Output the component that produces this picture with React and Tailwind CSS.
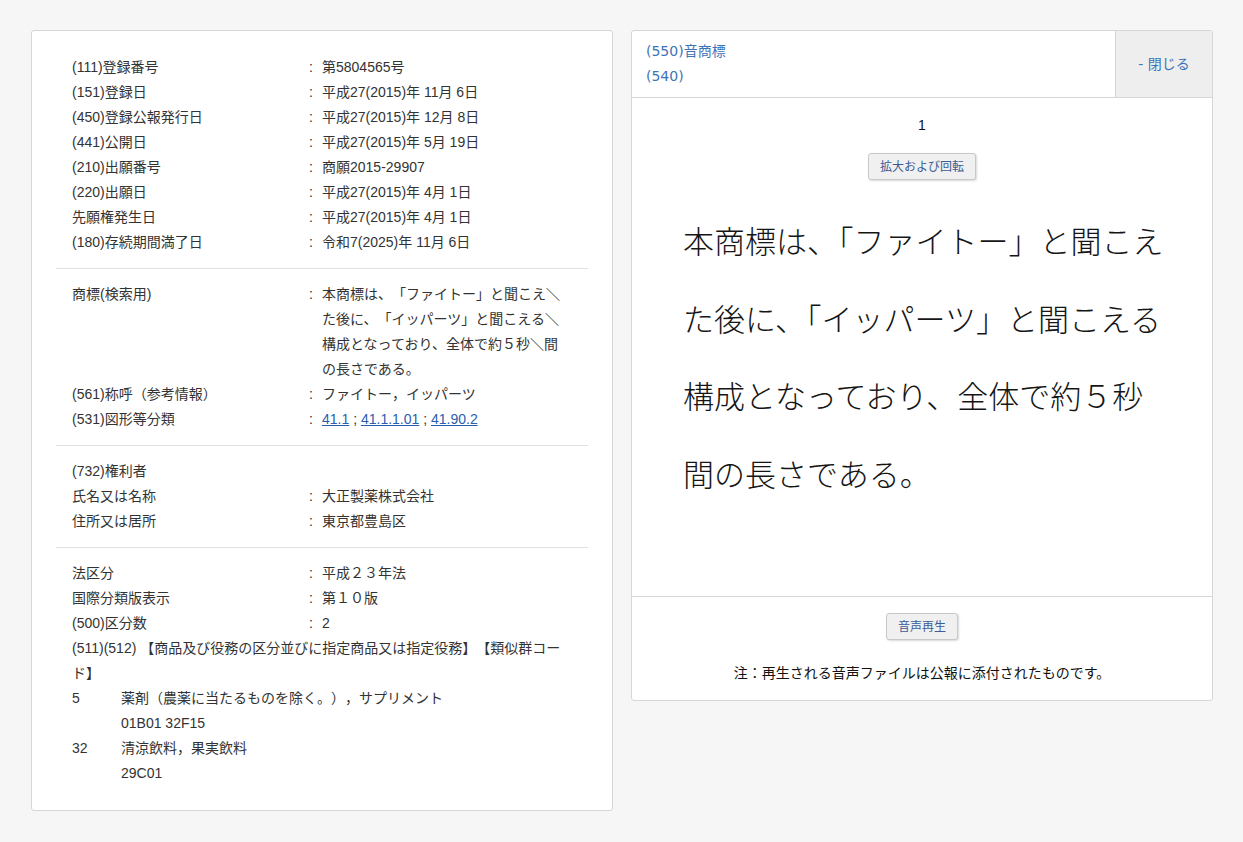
import React from 'react';

const font = { fontFamily: '"Liberation Sans", Arial, "Noto Sans CJK JP", sans-serif' };

const Row = ({ label, children, colon = true }) => (
  <div className="flex leading-[25px]">
    <div className="w-[237px] shrink-0">{label}</div>
    {colon ? (
      <>
        <div className="w-[4px] shrink-0">:</div>
        <div className="ml-[9px] w-[240px] [text-spacing-trim:space-all]">{children}</div>
      </>
    ) : null}
  </div>
);

const Section = ({ children, last }) => (
  <div className={last ? 'px-4 pt-[13px]' : 'px-4 pt-[13px] pb-[13px] border-b border-[#e0e0e0]'}>
    {children}
  </div>
);

const BigLines = [
  '本商標は、「ファイトー」と聞こえ',
  'た後に、「イッパーツ」と聞こえる',
  '構成となっており、全体で約５秒',
  '間の長さである。',
];

const App = () => {
  return (
    <div className="min-h-[842px] bg-[#f6f6f6] text-[14px] text-[#333] [text-spacing-trim:space-all]" style={font}>
      <div className="flex items-start gap-[18px] pl-[31px] pt-[30px]">
        {/* left card */}
        <div className="w-[582px] rounded-[3px] border border-[#d6d6d6] bg-white px-6 pt-[11px] pb-[24px]">
          <Section>
            <Row label="(111)登録番号">第5804565号</Row>
            <Row label="(151)登録日">平成27(2015)年 11月 6日</Row>
            <Row label="(450)登録公報発行日">平成27(2015)年 12月 8日</Row>
            <Row label="(441)公開日">平成27(2015)年 5月 19日</Row>
            <Row label="(210)出願番号">商願2015-29907</Row>
            <Row label="(220)出願日">平成27(2015)年 4月 1日</Row>
            <Row label="先願権発生日">平成27(2015)年 4月 1日</Row>
            <Row label="(180)存続期間満了日">令和7(2025)年 11月 6日</Row>
          </Section>
          <Section>
            <Row label="商標(検索用)">本商標は、「ファイトー」と聞こえ＼た後に、「イッパーツ」と聞こえる＼構成となっており、全体で約５秒＼間の長さである。</Row>
            <Row label="(561)称呼（参考情報）">ファイトー，イッパーツ</Row>
            <Row label="(531)図形等分類">
              <a href="#" className="text-[#2a5db0] underline">41.1</a>
              {' ; '}
              <a href="#" className="text-[#2a5db0] underline">41.1.1.01</a>
              {' ; '}
              <a href="#" className="text-[#2a5db0] underline">41.90.2</a>
            </Row>
          </Section>
          <Section>
            <Row label="(732)権利者" colon={false} />
            <Row label="氏名又は名称">大正製薬株式会社</Row>
            <Row label="住所又は居所">東京都豊島区</Row>
          </Section>
          <Section last>
            <Row label="法区分">平成２３年法</Row>
            <Row label="国際分類版表示">第１０版</Row>
            <Row label="(500)区分数">2</Row>
            <div className="leading-[25px]">(511)(512) 【商品及び役務の区分並びに指定商品又は指定役務】【類似群コード】</div>
            <div className="flex leading-[25px]">
              <div className="w-[49px] shrink-0">5</div>
              <div>
                <div>薬剤（農薬に当たるものを除く。），サプリメント</div>
                <div>01B01 32F15</div>
              </div>
            </div>
            <div className="flex leading-[25px]">
              <div className="w-[49px] shrink-0">32</div>
              <div>
                <div>清涼飲料，果実飲料</div>
                <div>29C01</div>
              </div>
            </div>
          </Section>
        </div>

        {/* right card */}
        <div className="w-[582px] rounded-[3px] border border-[#d6d6d6] bg-white">
          <div className="flex h-[67px] border-b border-[#d6d6d6]">
            <div
              className="flex-1 pl-[14px] pt-[8px] leading-[25px] text-[#3d73b9]"
              style={{ fontFamily: '"DejaVu Sans", "Noto Sans CJK JP", sans-serif' }}
            >
              <div>(550)音商標</div>
              <div>(540)</div>
            </div>
            <div
              className="flex w-[97px] items-center justify-center rounded-tr-[3px] border-l border-[#d6d6d6] bg-[#eeeeee] pt-[1px] text-[#3d73b9]"
              style={{ fontFamily: '"DejaVu Sans", "Noto Sans CJK JP", sans-serif' }}
            >
              - 閉じる
            </div>
          </div>

          <div className="flex h-[499px] flex-col items-center border-b border-[#d6d6d6] pt-[15px]">
            <div className="leading-[25px] text-[#111]">1</div>
            <button className="mt-[15px] h-[27px] rounded-[3px] border border-[#c8c8c8] bg-[#f0f0f0] px-[11px] text-[12px] text-[#3b5c95] shadow-[1px_1px_2px_rgba(0,0,0,0.15)]">
              拡大および回転
            </button>
            <div
              className="mt-[24px] w-[478px] whitespace-nowrap text-[31px] font-light leading-[77.5px] text-[#151515] [text-spacing-trim:normal]"
              style={{ fontFamily: '"Liberation Serif", "Noto Sans CJK JP", serif' }}
            >
              {BigLines.map((l) => (
                <div key={l}>{l}</div>
              ))}
            </div>
          </div>

          <div className="flex flex-col items-center pt-[16px] pb-[14px]">
            <button className="h-[27px] rounded-[3px] border border-[#c8c8c8] bg-[#f0f0f0] px-[11px] text-[12px] text-[#3b5c95] shadow-[1px_1px_2px_rgba(0,0,0,0.15)]">
              音声再生
            </button>
            <div className="mt-[21px] leading-[25px] text-[14px] text-[#111]">
              注：再生される音声ファイルは公報に添付されたものです。
            </div>
          </div>
        </div>
      </div>
    </div>
  );
};

export default App;
